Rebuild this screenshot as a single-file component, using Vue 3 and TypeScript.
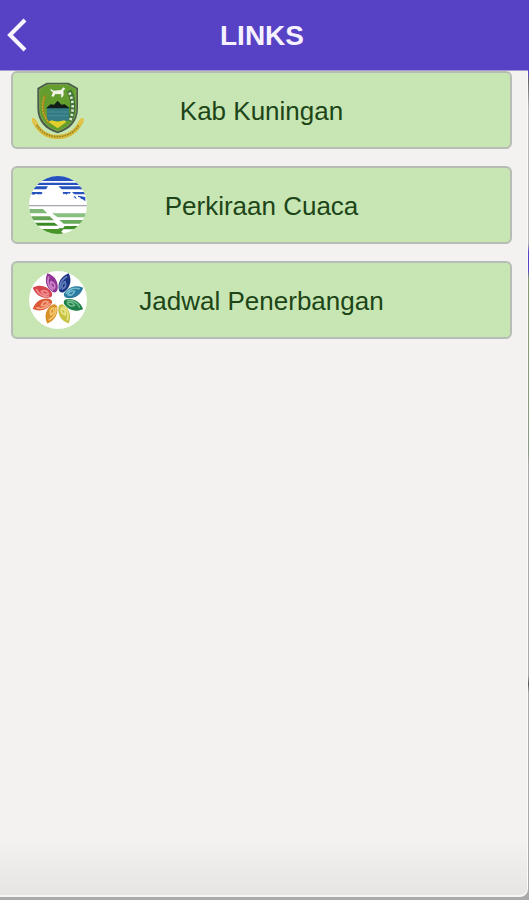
<script setup lang="ts">
interface LinkItem {
  id: 'kuningan' | 'weather' | 'flights'
  label: string
}

interface Petal {
  angle: number
  light: string
  dark: string
}

const links: LinkItem[] = [
  { id: 'kuningan', label: 'Kab Kuningan' },
  { id: 'weather', label: 'Perkiraan Cuaca' },
  { id: 'flights', label: 'Jadwal Penerbangan' },
]

const petals: Petal[] = [
  { angle: 23, light: '#6480be', dark: '#1c3580' },
  { angle: 67, light: '#74b8cf', dark: '#2c7a9f' },
  { angle: 113, light: '#6fb98a', dark: '#1d8048' },
  { angle: 157, light: '#e9e58a', dark: '#c6c243' },
  { angle: 203, light: '#f5c870', dark: '#d98f28' },
  { angle: 247, light: '#f5a483', dark: '#db5a37' },
  { angle: 293, light: '#f18f8e', dark: '#d6454e' },
  { angle: 337, light: '#cb86c8', dark: '#913594' },
]
</script>

<template>
  <div class="window">
    <div class="screen">
      <header class="bar">
        <button class="back" type="button" aria-label="Back">
          <svg viewBox="0 0 20 34" aria-hidden="true">
            <path d="M18 2 3 17l15 15" fill="none" stroke="#f8f5ff" stroke-width="4" />
          </svg>
        </button>
        <h1 class="title">LINKS</h1>
      </header>

      <nav class="links">
        <a v-for="link in links" :key="link.id" class="link" href="#">
          <svg v-if="link.id === 'kuningan'" class="logo" viewBox="27 33 174 174" aria-hidden="true">
            <path
              d="M52 54 80 38h66l28 16v60c0 42-25 65-61 76-36-11-61-34-61-76Z"
              fill="#4a5c4a"
            />
            <path
              d="M59 58 83 44h60l25 14v56c0 37-22 58-55 69-32-11-54-32-54-69Z"
              fill="#639d2d"
              stroke="#91ba55"
              stroke-width="2"
            />
            <path d="M147 62c14 24 15 60 2 91" fill="none" stroke="#3d7139" stroke-width="15" />
            <path
              d="M148 68c13 24 13 55 2 86"
              fill="none"
              stroke="#dce8d2"
              stroke-width="8"
              stroke-dasharray="7 6"
            />
            <path d="M76 76c-12 26-9 58 12 84" fill="none" stroke="#a18a20" stroke-width="7" />
            <path
              d="M71 82c-8 26-4 50 12 71"
              fill="none"
              stroke="#d2b134"
              stroke-width="4"
              stroke-dasharray="4 5"
            />
            <path
              d="m91 56 10 6 22-2 7-8 6 4-6 6 1 13-4 7h-4l1-9-18-1-5 8-7-1 5-12-6-4Z"
              fill="#f2f4e9"
            />
            <path d="M81 114h66v32l-7 7H89l-8-7Z" fill="#347c85" />
            <path d="M83 126h62M84 137h60" fill="none" stroke="#55969a" stroke-width="2" />
            <path d="m78 115 14-12 10 1 11-12 11 12 10-1 16 12Z" fill="#101d18" />
            <path d="m94 151 19 4 20-4 6 5-26 19-27-19Z" fill="#e2cf2d" />
            <path
              d="M43 153c12 29 37 48 70 48s58-19 71-48"
              fill="none"
              stroke="#d9bb39"
              stroke-width="13"
            />
            <path
              d="M46 158c13 26 37 42 67 42s55-16 68-42"
              fill="none"
              stroke="#94822c"
              stroke-width="5"
              stroke-dasharray="5 3"
            />
            <path d="m36 144 8 1 8 15-6 11-4-12-6-2Zm155 0-9 1-8 15 7 11 3-12 7-2Z" fill="#e3c44a" />
          </svg>

          <svg v-else-if="link.id === 'weather'" class="logo" viewBox="27 33 174 174" aria-hidden="true">
            <defs>
              <clipPath id="globe"><circle cx="114" cy="120" r="87" /></clipPath>
            </defs>
            <g clip-path="url(#globe)">
              <path d="M27 33h174v174H27Z" fill="#fff" />
              <g fill="#2552bd">
                <path d="M27 33h174v15H27Z" />
                <path d="M27 53h174v7H27Z" />
                <path d="M27 64h57l-6 9H27Zm88 0h86v9h-76Z" />
                <path d="M34 81h31l3 4-5 3H52l-4-2-6 3-8-1Z" />
                <path d="M128 81h24l-2 5-6-1-4 4-4-3-6 2Zm28 0h45v7h-38Z" />
                <path d="m160 93 7 2 3 6-5-1Zm14-1 10 2 12 2v13l-8-6-5-1-3-5-6-1Z" />
              </g>
              <path d="M27 122h174" stroke="#a6a6ae" stroke-width="4" />
              <path d="M27 132h42l13 13H27Z" fill="#80b878" />
              <path d="M96 145h105v12h-88Z" fill="#8abf82" />
              <path d="M27 154h62l13 12H27Z" fill="#65a554" />
              <path d="M118 165h83v11h-70Z" fill="#69aa5d" />
              <path d="M27 173h76l12 9H27Z" fill="#3d8b27" />
              <path d="M134 183h67v10h-71l-7 7-8-10h14Z" fill="#3f8f28" />
              <path d="M50 192h68l12 15H50Z" fill="#49942b" />
            </g>
          </svg>

          <svg v-else class="logo" viewBox="27 33 174 174" aria-hidden="true">
            <circle cx="114" cy="120" r="87" fill="#fff" />
            <g
              v-for="petal in petals"
              :key="petal.angle"
              :transform="`translate(114 115) rotate(${petal.angle})`"
            >
              <path
                d="M0-82C18-67 21-45 10-26 6-19-4-17-8-25-20-43-17-66 0-82Z"
                :fill="petal.dark"
              />
              <path
                d="M0-71C-13-57-13-39-4-27M3-30C-6-37-6-47 0-54 7-47 8-39 3-33"
                fill="none"
                :stroke="petal.light"
                stroke-width="5"
              />
            </g>
          </svg>
          <span class="label">{{ link.label }}</span>
        </a>
      </nav>
    </div>
  </div>
</template>

<style>
body {
  margin: 0;
}
</style>

<style scoped>
.window {
  box-sizing: border-box;
  min-height: 100vh;
  display: flex;
  padding: 0 1px 3px 0;
  background: linear-gradient(
    #5742c5 0 8%,
    #626866 9%,
    #b5b5b6 12% 27%,
    #5742c5 28% 30%,
    #829b6e 31%,
    #899983 50%,
    #aaa 52% 75%,
    #555 76%,
    #aaa 77%
  );
  font-family: "Liberation Sans", Arial, sans-serif;
}

.screen {
  box-sizing: border-box;
  flex: 1;
  border-right: 1px solid #fafafa;
  border-bottom: 2px solid #f5f5f5;
  border-bottom-right-radius: 8px;
  background: linear-gradient(to top, #e6e5e4, #f3f2f0 56px);
}

.bar {
  display: grid;
  grid-template-columns: 36px 1fr 40px;
  align-items: center;
  height: 70px;
  margin-right: -1px;
  border-bottom: 1px solid #a39bd0;
  background: #5742c5;
}

.back {
  display: flex;
  padding: 0 0 0 7px;
  border: 0;
  background: none;
  cursor: pointer;
}

.back svg {
  width: 20px;
  height: 34px;
}

.title {
  margin: 0;
  padding-top: 2px;
  color: #f5f1ff;
  font-size: 28px;
  line-height: 32px;
  text-align: center;
}

.links {
  display: grid;
  gap: 17px;
  padding: 0 15px 0 11px;
}

.link {
  box-sizing: border-box;
  display: grid;
  grid-template-columns: 58px 1fr 58px;
  align-items: center;
  min-height: 78px;
  padding: 0 16px;
  border: 2px solid #b7bdb4;
  border-radius: 6px;
  background: #c7e6b3;
  color: #1d4518;
  text-decoration: none;
}

.logo {
  width: 58px;
  height: 58px;
}

.label {
  padding-top: 2px;
  font-size: 26px;
  line-height: 32px;
  text-align: center;
}
</style>
